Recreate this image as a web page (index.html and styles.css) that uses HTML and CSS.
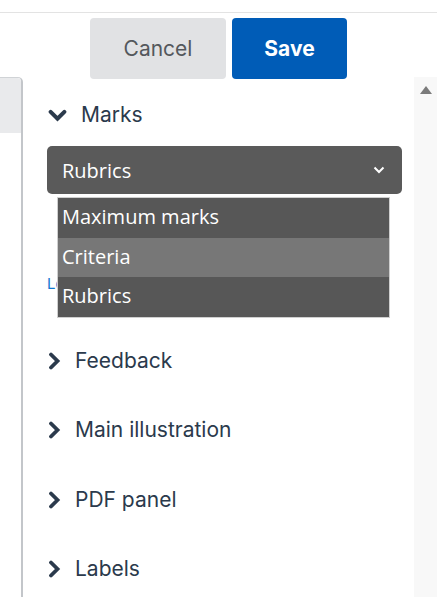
FILE: index.html
```html
<!DOCTYPE html>
<html lang="en">
<head>
  <meta charset="UTF-8">
  <meta name="viewport" content="width=device-width, initial-scale=1.0">
  <title>Rubric settings</title>
  <link rel="stylesheet" href="styles.css">
</head>
<body>

  <div class="topbar"></div>

  <!-- Action buttons -->
  <div class="actions">
    <button class="btn btn-cancel">Cancel</button>
    <button class="btn btn-save">Save</button>
  </div>

  <div class="main">
    <div class="sidebar">
      <div class="sidebar-item"></div>
    </div>

    <div class="settings">
      <!-- Marks (expanded) -->
      <div class="section open">
        <div class="section-head">
          <svg class="chev chev-down" viewBox="0 0 18 12"><path d="M2.5 2.5 L9 9 L15.5 2.5"/></svg>
          <span>Marks</span>
        </div>
        <div class="select-wrap">
          <div class="select">
            <span>Rubrics</span>
            <svg class="select-caret" viewBox="0 0 12 8"><path d="M1.5 1.5 L6 6 L10.5 1.5"/></svg>
          </div>
          <ul class="dropdown">
            <li>Maximum marks</li>
            <li class="hover">Criteria</li>
            <li>Rubrics</li>
          </ul>
        </div>
        <a class="help-link">Learn more</a>
      </div>

      <div class="section">
        <div class="section-head">
          <svg class="chev chev-right" viewBox="0 0 14 18"><path d="M3 2.5 L9.5 9 L3 15.5"/></svg>
          <span>Feedback</span>
        </div>
      </div>

      <div class="section">
        <div class="section-head">
          <svg class="chev chev-right" viewBox="0 0 14 18"><path d="M3 2.5 L9.5 9 L3 15.5"/></svg>
          <span>Main illustration</span>
        </div>
      </div>

      <div class="section">
        <div class="section-head">
          <svg class="chev chev-right" viewBox="0 0 14 18"><path d="M3 2.5 L9.5 9 L3 15.5"/></svg>
          <span>PDF panel</span>
        </div>
      </div>

      <div class="section">
        <div class="section-head">
          <svg class="chev chev-right" viewBox="0 0 14 18"><path d="M3 2.5 L9.5 9 L3 15.5"/></svg>
          <span>Labels</span>
        </div>
      </div>
    </div>

    <div class="scrollbar">
      <div class="scroll-up"></div>
    </div>
  </div>

</body>
</html>
```

FILE: styles.css
```css
/* Base */
* { box-sizing: border-box; margin: 0; padding: 0; }

body {
  font-family: Inter, 'Liberation Sans', sans-serif;
  background: #fff;
  width: 437px;
  height: 597px;
  overflow: hidden;
}

.topbar {
  height: 13px;
  border-bottom: 1px solid #e3e3e3;
}

/* Buttons */
.actions {
  display: flex;
  justify-content: center;
  gap: 6px;
  padding-top: 5px;
  position: relative;
  z-index: 2;
}

.btn {
  height: 61px;
  border: none;
  border-radius: 4px;
  font-family: Inter, 'Liberation Sans', sans-serif;
  font-size: 21px;
}

.btn-cancel { width: 136px; background: #e1e2e4; color: #54585c; }
.btn-save { width: 115px; background: #005cb7; color: #fff; font-weight: 700; }

/* Main area */
.main {
  display: flex;
  margin-top: -2px;
  height: 520px;
}

.sidebar {
  width: 23px;
  border-top: 1px solid #d0d3d6;
  border-right: 2px solid #c3c6ca;
  border-top-right-radius: 5px;
}

.sidebar-item { height: 55px; background: #e9eaec; border-top-right-radius: 4px; }

.settings {
  flex: 1;
  padding: 17px 0 0 24px;
}

.scrollbar {
  width: 23px;
  background: #f8f8f8;
  padding: 9px 0 0 6px;
}

.scroll-up {
  width: 0; height: 0;
  border-left: 6px solid transparent;
  border-right: 6px solid transparent;
  border-bottom: 8px solid #7b7b7b;
}

/* Sections */
.section { height: 69.6px; }
.section.open { height: 246px; }

.section-head {
  display: flex;
  align-items: center;
  height: 40px;
  color: #2b3a4c;
  font-size: 21px;
}

.chev { fill: none; stroke: #2b3a4c; stroke-width: 3.8; stroke-linecap: round; stroke-linejoin: miter; }
.chev-down { width: 19px; height: 13px; margin: 2px 14px 0 1px; }
.chev-right { width: 14px; height: 18px; margin: 1px 13px 0 1px; }

/* Select + open list */
.select-wrap { position: relative; margin-top: 12px; width: 355px; }

.select {
  display: flex;
  align-items: center;
  justify-content: space-between;
  height: 48px;
  padding: 0 17px 0 15px;
  background: #5a5a5a;
  border-radius: 5px;
  color: #fff;
  font-family: 'Open Sans', sans-serif;
  font-size: 20px;
}

.select-caret { width: 12px; height: 8px; fill: none; stroke: #fff; stroke-width: 2; }

.dropdown {
  position: absolute;
  top: 51px;
  left: 10px;
  width: 333px;
  list-style: none;
  border: 1px solid #cfcfcf;
  z-index: 3;
}

.dropdown li {
  height: 39.5px;
  line-height: 38px;
  padding-left: 4px;
  background: #575757;
  color: #fff;
  font-family: 'Open Sans', sans-serif;
  font-size: 20px;
}

.dropdown li.hover { background: #777; }

.help-link {
  display: block;
  margin-top: 80px;
  color: #1177d1;
  font-size: 15px;
}
```
